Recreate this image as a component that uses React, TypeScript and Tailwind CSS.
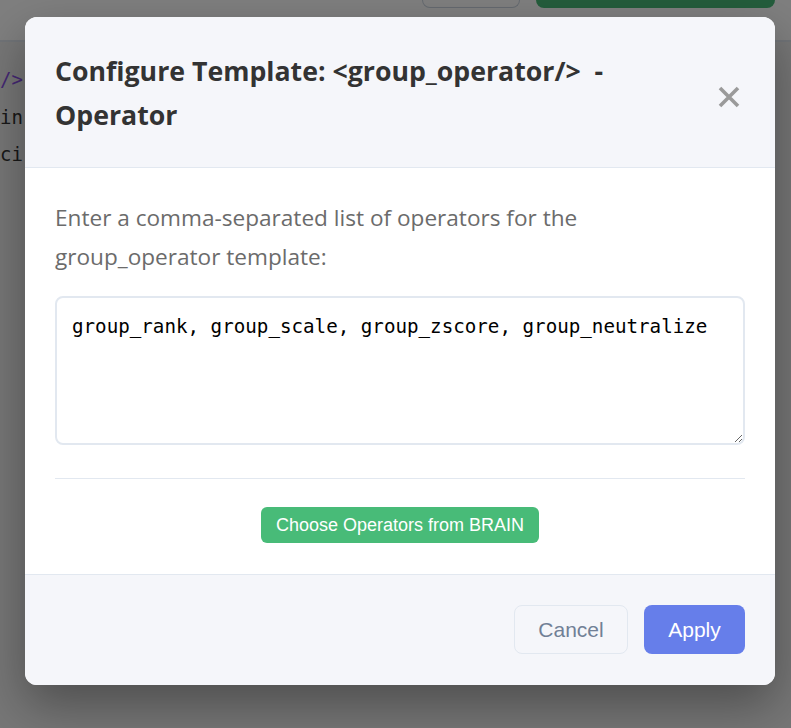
import React, { useState } from 'react';

const CloseIcon: React.FC = () => (
  <svg width="22" height="22" viewBox="0 0 22 22" fill="none">
    <path d="M2 2 L20 20 M20 2 L2 20" stroke="#9a9a9a" strokeWidth="3.6" strokeLinecap="butt" />
  </svg>
);

const App: React.FC = () => {
  const [ops, setOps] = useState('group_rank, group_scale, group_zscore, group_neutralize');

  return (
    <div className="relative h-screen w-full overflow-hidden bg-[#eeeeee] font-['Open_Sans',sans-serif]">
      {/* page behind the dialog */}
      <div className="h-[42px] bg-white border-b-2 border-[#e2e8f0] flex justify-end items-start gap-4 pr-4">
        <div className="w-[98px] h-[8px] rounded-b-lg border border-t-0 border-[#cbd5e0]" />
        <div className="w-[239px] h-[8px] rounded-b-lg bg-[#48bb78]" />
      </div>
      <div className="pt-[19px] font-['DejaVu_Sans_Mono',monospace] text-[19px] leading-[37.5px] text-[#333] whitespace-pre">
        <div className="text-[#8a50e8]">{'/>'}</div>
        <div>{'in'}</div>
        <div>{'ci'}</div>
      </div>

      {/* overlay */}
      <div className="absolute inset-0 bg-black/50">
        <div className="ml-[25px] mt-[17px] w-[750px] rounded-xl overflow-hidden bg-white shadow-[0_20px_50px_rgba(0,0,0,0.35)]">
          {/* header */}
          <div className="bg-[#f5f6fa] border-b border-[#e2e8f0] pl-[30px] pr-[35px] pt-[32px] pb-[30px] flex justify-between items-start">
            <h2 className="text-[26.7px] leading-[44px] font-bold text-[#333] w-[600px]">
              Configure Template: &lt;group_operator/&gt;&nbsp; - Operator
            </h2>
            <button className="mt-[37px]">
              <CloseIcon />
            </button>
          </div>

          {/* body */}
          <div className="px-[30px] pt-[30px] pb-[31px]">
            <p className="text-[22.6px] leading-[39px] text-[#6b6b6b] mb-5 max-w-[620px]">
              Enter a comma-separated list of operators for the group_operator template:
            </p>
            <textarea
              value={ops}
              onChange={(e) => setOps(e.target.value)}
              className="block w-full h-[149px] border-2 border-[#e2e8f0] rounded-lg p-[15px] font-['DejaVu_Sans_Mono',monospace] text-[19.2px] leading-[28px] text-black outline-none"
            />
            <div className="mt-[33px] border-t border-[#e2e8f0] pt-[28px] flex justify-center">
              <button className="h-[36px] px-[15px] rounded-md bg-[#48bb78] text-white text-[18px] font-['Liberation_Sans',Arial,sans-serif]">
                Choose Operators from BRAIN
              </button>
            </div>
          </div>

          {/* footer */}
          <div className="bg-[#f5f6fa] border-t border-[#e2e8f0] pt-[30px] pb-[31px] pr-[30px] flex justify-end gap-4 font-['Liberation_Sans',Arial,sans-serif]">
            <button className="h-[49px] w-[114px] rounded-lg border border-[#e2e8f0] text-[#718096] text-[21px]">
              Cancel
            </button>
            <button className="h-[49px] w-[101px] rounded-lg bg-[#667eea] text-white text-[21px]">
              Apply
            </button>
          </div>
        </div>
      </div>
    </div>
  );
};

export default App;
